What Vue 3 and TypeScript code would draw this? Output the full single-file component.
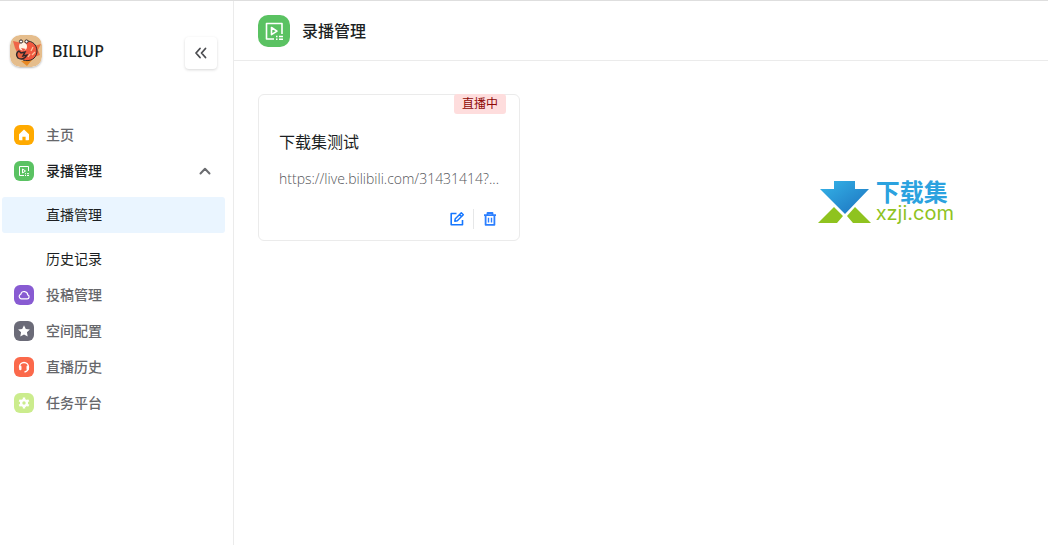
<script setup lang="ts">
import { ref } from 'vue'

interface NavItem {
  label: string
  icon: string
  children?: string[]
}

const items: NavItem[] = [
  { label: '主页', icon: 'home' },
  { label: '录播管理', icon: 'live', children: ['直播管理', '历史记录'] },
  { label: '投稿管理', icon: 'cloud' },
  { label: '空间配置', icon: 'star' },
  { label: '直播历史', icon: 'headset' },
  { label: '任务平台', icon: 'gear' },
]

const open = ref(true)
const selected = ref('直播管理')
</script>

<template>
  <div class="layout">
    <aside class="sidebar">
      <div class="brand">
        <svg class="logo" viewBox="0 0 32 32" aria-hidden="true">
          <rect width="32" height="32" rx="10" fill="#e5bd8c" />
          <path d="M3 6l9 2 3 5-8 4-2-4z" fill="#ef6548" />
          <path d="M24 11l7-2-3 6 2 5-6 2z" fill="#ef7448" />
          <path d="M11 26l11-1-5 6z" fill="#e88924" />
          <path d="M15 7c8-2 12 4 12 10-1 7-7 10-13 8-5-1-7-5-5-9z" fill="#f0583f" />
          <path d="M18 6c7 1 9 6 9 11-1 7-7 10-14 8" fill="none" stroke="#30272a" stroke-width="1" />
          <path d="M23 12l-2 4M25 17l-3 3M20 19l-2 3" fill="none" stroke="#fbc39c" stroke-width="1.300" />
          <path d="M9 16c-3 1-3 5-1 7 3 2 7 1 9-3l-4 1 2-4-4 1z" fill="#e86240" stroke="#30272a" stroke-width="1.500" />
          <circle cx="13" cy="11.500" r="4" fill="#fff1e4" />
          <circle cx="11" cy="6.500" r="1.600" fill="#fff" stroke="#30272a" />
          <circle cx="16.500" cy="6.500" r="1.600" fill="#fff" stroke="#30272a" />
          <path d="M11 13l5 1-3 2z" fill="#e9503a" />
        </svg>
        <span class="brand-name">BILIUP</span>
        <button class="collapse" type="button" aria-label="收起侧边栏">
          <svg viewBox="0 0 16 16" width="16" height="16"><path d="M7 3.500L3 8l4 4.500M12.500 3.500L8.500 8l4 4.500" fill="none" stroke="#4b4c50" stroke-width="1.800" stroke-linecap="round" stroke-linejoin="round" /></svg>
        </button>
      </div>
      <nav>
        <template v-for="item in items" :key="item.label">
          <component
            :is="item.children ? 'button' : 'a'"
            class="row"
            :class="{ active: item.children }"
            :href="item.children ? undefined : '#'"
            :type="item.children ? 'button' : undefined"
            :aria-expanded="item.children ? open : undefined"
            @click.prevent="item.children && (open = !open)"
          >
            <svg class="badge" :class="item.icon" viewBox="0 0 20 20" aria-hidden="true">
              <path v-if="item.icon === 'home'" d="M10 4.600l5 4.600v5.200q0 .8-.8.8h-2.600v-3.500H8.400v3.500H5.800q-.8 0-.8-.8V9.200z" fill="#fff" />
              <g v-else-if="item.icon === 'live'" fill="none" stroke="#fff">
                <path d="M10 14.500H5.500v-9h9V10M8.500 8v4l3-2z" />
                <path d="M11 12.700h1M13 12.700h2M11 14.500h1M13 14.500h2" />
              </g>
              <path v-else-if="item.icon === 'cloud'" d="M7 13.800h6.200a2 2 0 0 0 .5-3.900 3.500 3.500 0 0 0-6.900-.7A2.400 2.400 0 0 0 7 13.800z" fill="none" stroke="#fff" stroke-width="1.200" />
              <path v-else-if="item.icon === 'star'" d="M10 4.200l1.800 3.700 4.100.5-3 2.900.8 4.100-3.700-2-3.700 2 .8-4.100-3-2.900 4.100-.5z" fill="#fff" />
              <g v-else-if="item.icon === 'headset'" fill="none" stroke="#fff">
                <path d="M5.500 10.500V10a4.500 4.500 0 0 1 9 0v.5q0 3.500-4 4.500" stroke-width="1.300" />
                <path d="M6.300 9.800v2.200M13.700 9.800v2.200" stroke-width="2.400" stroke-linecap="round" />
              </g>
              <g v-else fill="none" stroke="#fff">
                <circle cx="10" cy="10" r="2.900" stroke-width="2.400" />
                <path d="M10 4.500v2M10 13.500v2M5.240 7.250l1.730 1M13.030 11.750l1.730 1M5.240 12.750l1.730-1M13.030 8.250l1.730-1" stroke-width="2.400" />
              </g>
            </svg>
            <span>{{ item.label }}</span>
            <svg v-if="item.children" class="chevron" viewBox="0 0 16 16" width="16" height="16"><path d="M3.500 10.500L8 5.800l4.500 4.700" fill="none" stroke="#6b6c70" stroke-width="2" stroke-linecap="round" stroke-linejoin="round" /></svg>
          </component>
          <div v-if="item.children && open" class="children">
            <a v-for="child in item.children" :key="child" href="#" class="child" :class="{ selected: child === selected }" @click.prevent="selected = child">{{ child }}</a>
          </div>
        </template>
      </nav>
    </aside>

    <div class="content">
      <header class="header">
        <svg class="header-icon" viewBox="0 0 32 32" aria-hidden="true">
          <g fill="none" stroke="#fff" stroke-width="1.600" stroke-linejoin="round">
            <path d="M16 24H8.500V8.500h15.500V19" />
            <path d="M13.500 12.500v7.200l5.500-3.600z" />
            <path d="M18 21.500h1.500M21 21.500h4M18 24.200h1.500M21 24.200h4" />
          </g>
        </svg>
        <h1>录播管理</h1>
      </header>
      <main>
        <article class="card">
          <span class="status">直播中</span>
          <h2>下载集测试</h2>
          <p class="url">https://live.bilibili.com/31431414?...</p>
          <div class="actions">
            <button type="button" aria-label="编辑">
              <svg viewBox="0 0 16 16" width="16" height="16" fill="none" stroke="#1677ff" stroke-width="1.600" stroke-linejoin="round"><path d="M7.500 2.500H2.200v11.300h11.300V9" /><path d="M5.800 10.200l.5-2.500 6-6 2 2-6 6zM10.500 3.600l2 2" stroke-width="1.500" /></svg>
            </button>
            <span class="divider"></span>
            <button type="button" aria-label="删除">
              <svg viewBox="0 0 16 16" width="16" height="16" fill="none" stroke="#2b7fff" stroke-linejoin="round"><path d="M2 4.200h12M5.500 3.800V2h5v1.800M3.600 4.500v9.300h8.800V4.500" stroke-width="1.800" /><path d="M6.500 6.800v4.700M9.500 6.800v4.700" stroke-width="1.400" /></svg>
            </button>
          </div>
        </article>
      </main>
      <div class="watermark">
        <svg viewBox="0 0 54 42" width="54" height="42" aria-hidden="true">
          <defs><linearGradient id="arrow" x1="0" y1="0" x2="1" y2="1"><stop offset="0" stop-color="#35b5e9" /><stop offset="1" stop-color="#1c70bd" /></linearGradient></defs>
          <path d="M16 0h21v8h14L27 33 2 8h14z" fill="url(#arrow)" />
          <path d="M16 26l9 9-6 7H0zM37 26l16 16H35l-6-7z" fill="#8fc31f" />
        </svg>
        <div class="mark-text">
          <span class="mark-name">下载集</span>
          <span class="mark-site">xzji.com</span>
        </div>
      </div>
    </div>
  </div>
</template>

<style>
body {
  margin: 0;
  background: #fff;
}
</style>

<style scoped>
.layout {
  display: flex;
  box-sizing: border-box;
  min-height: 100vh;
  border-top: 1px solid #dedede;
  color: #1c1f23;
  font-family: "Noto Sans", "Noto Sans CJK SC", sans-serif;
  font-size: 14px;
}

button {
  border: 0;
  padding: 0;
  background: none;
  font: inherit;
  cursor: pointer;
}

.sidebar {
  box-sizing: border-box;
  flex: 0 0 234px;
  border-right: 1px solid #ebebeb;
}

.brand {
  display: flex;
  align-items: center;
  gap: 10px;
  padding: 32px 16px 48px 10px;
}

.logo {
  width: 32px;
  height: 32px;
  border-radius: 10px;
  box-shadow: 0 1px 2px #bbb;
}

.brand-name {
  font-size: 16px;
  font-weight: 500;
  line-height: 24px;
}

.collapse {
  display: grid;
  place-items: center;
  width: 32px;
  height: 32px;
  margin-top: 4px;
  margin-left: auto;
  border-radius: 4px;
  box-shadow: 0 1px 3px rgba(0, 0, 0, 0.16);
}

nav {
  padding: 0 8px 0 2px;
}

.row {
  display: flex;
  align-items: center;
  gap: 12px;
  box-sizing: border-box;
  width: 100%;
  height: 36px;
  padding: 0 12px;
  color: #66676b;
  font-weight: 500;
  line-height: 20px;
  text-decoration: none;
}

.row.active {
  color: #1c1f23;
}

.badge {
  width: 20px;
  height: 20px;
  border-radius: 6px;
}

.home { background: #ffaa00; }
.live { background: #5ac262; }
.cloud { background: #885bd2; }
.star { background: #6b6b78; }
.headset { background: #fb694b; }
.gear { background: #cbec8d; }

.chevron {
  margin-left: auto;
}

.children {
  display: grid;
  gap: 8px;
  padding-top: 8px;
}

.child {
  border-radius: 3px;
  padding-left: 44px;
  color: #1c1f23;
  line-height: 36px;
  text-decoration: none;
}

.child.selected {
  background: #eaf5ff;
}

.content {
  position: relative;
  flex: 1;
  min-width: 0;
}

.header {
  display: flex;
  align-items: center;
  gap: 12px;
  box-sizing: border-box;
  height: 60px;
  padding: 0 24px;
  border-bottom: 1px solid #ebebeb;
}

.header-icon {
  width: 32px;
  height: 32px;
  border-radius: 10px;
  background: #5ac262;
}

h1 {
  margin: 0;
  font-size: 16px;
  font-weight: 500;
  line-height: 24px;
}

main {
  display: grid;
  grid-template-columns: repeat(auto-fill, 262px);
  gap: 24px;
  padding: 33px 24px;
}

.card {
  position: relative;
  padding: 35px 21px 9px 20px;
  border: 1px solid #ebebeb;
  border-radius: 6px;
}

.status {
  position: absolute;
  top: -1px;
  right: 13px;
  padding: 0 8px;
  border-radius: 3px;
  background: #fedddd;
  color: #8e0805;
  font-size: 12px;
  line-height: 20px;
}

h2 {
  margin: 0 0 14px;
  font-size: 16px;
  font-weight: 400;
  line-height: 24px;
}

.url {
  margin: 0;
  color: #55565a;
  font-family: "Open Sans", "Noto Sans", sans-serif;
  font-size: 14px;
  font-weight: 300;
  line-height: 22px;
  white-space: nowrap;
}

.actions {
  display: flex;
  align-items: center;
  justify-content: flex-end;
  gap: 8px;
  padding-top: 17px;
}

.actions button {
  display: grid;
  place-items: center;
  width: 16px;
  height: 24px;
}

.divider {
  width: 1px;
  height: 20px;
  background: #e6e7e8;
}

.watermark {
  position: absolute;
  top: 178px;
  right: 94px;
  display: flex;
  align-items: flex-end;
  gap: 4px;
}

.mark-text {
  display: grid;
}

.mark-name {
  color: #2ba2df;
  font-family: "Noto Sans CJK SC", sans-serif;
  font-size: 24px;
  font-weight: 700;
  line-height: 24px;
}

.mark-site {
  color: #8fc31f;
  font-family: Inter, sans-serif;
  font-size: 20px;
  font-weight: 400;
  line-height: 20px;
}
</style>
